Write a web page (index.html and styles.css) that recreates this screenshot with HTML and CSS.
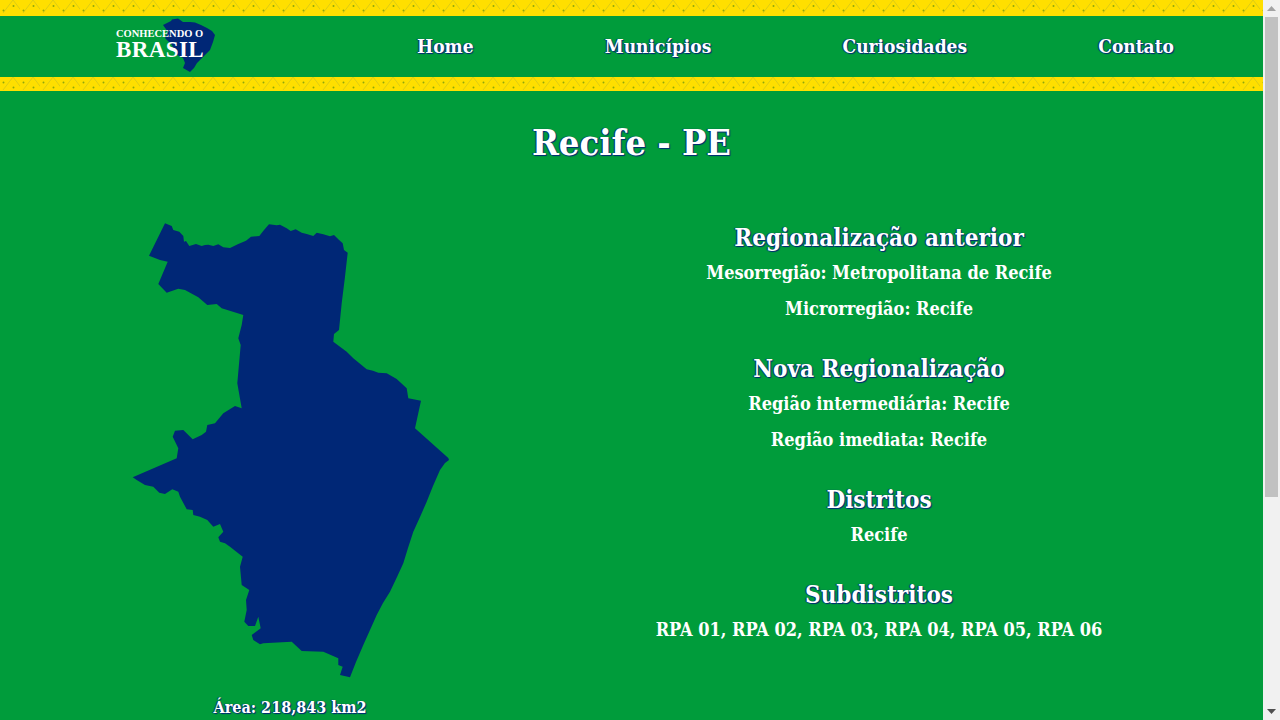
FILE: index.html
```html
<!DOCTYPE html>
<html lang="pt-BR">
<head>
<meta charset="utf-8">
<title>Recife - PE</title>
<link rel="stylesheet" href="styles.css">
</head>
<body>
<header class="site-header">
  <div class="band band-top"></div>
  <nav class="nav">
    <a class="logo" href="#">
      <svg class="logo-map" viewBox="160 18 56 57" aria-hidden="true">
        <path d="M163 25L171 21L172 19.500L178 18.500L183 22L190 22L195 22.500L201 25L207 28L212 31L215 35L213 42L210 50L203 57L197 63L194 68L190 72L183 68L185 63L183 58L175 54L172 45L165 38L168 32Z"/>
      </svg>
      <span class="logo-small">CONHECENDO O</span>
      <span class="logo-big">BRASIL</span>
    </a>
    <ul class="menu">
      <li><a href="#">Home</a></li>
      <li><a href="#">Municípios</a></li>
      <li><a href="#">Curiosidades</a></li>
      <li><a href="#">Contato</a></li>
    </ul>
  </nav>
  <div class="band band-bottom"></div>
</header>
<main class="page">
  <h1 class="title">Recife - PE</h1>
  <div class="columns">
    <section class="map-col">
      <svg class="map" viewBox="130 220 322 460" aria-label="Mapa de Recife">
        <path d="M165 223.3L171.7 226L173.3 230L179.3 231.7L183.3 236L184 241.700L186 241L189.3 246L196 244L201.7 246L205 245L208.3 244.7L213.3 246L218.3 244.3L223.3 247.3L230 248L238.3 244L246 240.7L251 236.7L259.3 236L264 230L269 224.3L276.7 225.3L280 224.7L286.7 228.3L290.7 231L295.7 229.3L301.7 232.7L306.7 234L313.3 236L316.7 232.7L323.3 234.3L330 236.3L334 235L338.3 239.3L342.7 243.3L344 250L347.7 252.7L345 276.7L341.7 303.3L339 330L334 334L333.3 341.7L346.7 351.7L353.3 358.3L366.7 369.3L373 370.7L378.3 372.7L386.7 373.3L396.7 379L406.7 388.3L408.3 398.3L421 400.7L415 428.3L448.3 458L449 460L445 463L440 470L433 486L426.7 501.700L420 517L413.3 531.7L408 548L403.3 563.3L397 577L390 591.700L383 603L376.7 615L370 630L363.3 645L356 662L350 677.3L340 675L342.7 666.7L338.3 665L338.3 658.3L323.3 651.7L301.7 651L291.7 641.7L263.3 643.3L260 644.3L253.3 640L251.7 635L260.7 628.3L258.3 616.7L255 626L248.3 626L244.3 621.7L246.7 610L246 600L249.3 590L241.7 585L240 566.7L242.7 556.7L230 546.7L225 543.3L220 541.7L218.3 537.3L223.3 531.7L220 524L213.3 526.7L207.3 520L200 516.7L193.3 515L192.7 510L186.7 509.3L180 496.7L178.3 491.7L172.3 489.3L165 494L159.3 492.7L153.3 486.7L145 485L136.7 480L132.7 477.3L176.7 458.3L178.3 448.3L172.7 436.7L175 430.7L183.3 430L192.7 439.3L201.7 435L206 431.7L207.3 425L215 423.3L223.3 413.3L235 406L241.7 408.3L237.3 383.3L240.7 345L238.3 338.3L241.7 325L243.3 315L221.7 308.3L216.7 304L207.3 305L198.3 297.3L185 290L178.3 288.7L166.7 292.7L158.3 284L167.7 261.7L160 260L149 255.7Z"/>
      </svg>
      <p class="area">Área: 218,843 km2</p>
    </section>
    <section class="info-col">
      <div class="info-block">
        <h2>Regionalização anterior</h2>
        <p>Mesorregião: Metropolitana de Recife</p>
        <p>Microrregião: Recife</p>
      </div>
      <div class="info-block">
        <h2>Nova Regionalização</h2>
        <p>Região intermediária: Recife</p>
        <p>Região imediata: Recife</p>
      </div>
      <div class="info-block">
        <h2>Distritos</h2>
        <p>Recife</p>
      </div>
      <div class="info-block">
        <h2>Subdistritos</h2>
        <p>RPA 01, RPA 02, RPA 03, RPA 04, RPA 05, RPA 06</p>
      </div>
    </section>
  </div>
</main>
<div class="scrollbar" aria-hidden="true">
  <span class="scroll-arrow arrow-up"></span>
  <div class="scroll-track"><div class="scroll-thumb"></div></div>
  <span class="scroll-arrow arrow-down"></span>
</div>
</body>
</html>
```
FILE: styles.css
```css
* { box-sizing: border-box; }
html { background: #009c3b; }
body {
  margin: 0 17px 0 0;
  min-height: 1027px;
  background: #009c3b;
  color: #fff;
  font-family: "DejaVu Serif Condensed", "DejaVu Serif", serif;
  font-stretch: condensed;
  font-weight: 700;
}
.scrollbar {
  position: fixed;
  top: 0;
  right: 0;
  bottom: 0;
  width: 17px;
  background: #f1f1f1;
  display: flex;
  flex-direction: column;
  align-items: center;
}
.scroll-arrow {
  flex: none;
  width: 17px;
  height: 17px;
  background-repeat: no-repeat;
  background-position: center;
}
.arrow-up {
  background-image: url("data:image/svg+xml,%3Csvg xmlns='http://www.w3.org/2000/svg' width='9' height='5'%3E%3Cpath d='M0 5L4.500 0L9 5z' fill='%23a3a3a3'/%3E%3C/svg%3E");
}
.arrow-down {
  background-image: url("data:image/svg+xml,%3Csvg xmlns='http://www.w3.org/2000/svg' width='9' height='5'%3E%3Cpath d='M0 0L4.500 5L9 0z' fill='%23505050'/%3E%3C/svg%3E");
}
.scroll-track { flex: 1; width: 100%; padding: 0 2px 206px; }
.scroll-thumb { height: 100%; background: #c1c1c1; }
.band {
  background-color: #ffdf00;
  background-size: 20px 16px;
}
.band-top {
  height: 16px;
  background-image: url("data:image/svg+xml,%3Csvg xmlns='http://www.w3.org/2000/svg' width='20' height='16'%3E%3Cpath d='M3 13L13 0L23 13' fill='none' stroke='%23dccb14' stroke-width='1'/%3E%3Ccircle cx='13.500' cy='6' r='1' fill='%238fa80c'/%3E%3Ccircle cx='3.500' cy='10.500' r='1' fill='%238fa80c'/%3E%3C/svg%3E");
}
.band-bottom {
  height: 14px;
  background-image: url("data:image/svg+xml,%3Csvg xmlns='http://www.w3.org/2000/svg' width='20' height='16'%3E%3Cpath d='M3 13L13 0L23 13' fill='none' stroke='%23dccb14' stroke-width='1'/%3E%3Ccircle cx='13.500' cy='10.500' r='1' fill='%238fa80c'/%3E%3Ccircle cx='3.500' cy='5.500' r='1' fill='%238fa80c'/%3E%3C/svg%3E");
}
.nav {
  height: 61px;
  display: flex;
  align-items: center;
  padding: 0 89px 0 115px;
}
.logo {
  position: relative;
  display: flex;
  flex-direction: column;
  width: 100px;
  height: 57px;
  padding: 10px 0 0 1px;
  color: #fff;
  text-decoration: none;
  font-family: "Liberation Serif", serif;
  font-stretch: normal;
}
.logo-map { position: absolute; left: 45px; top: 0; width: 56px; height: 57px; fill: #002776; }
.logo-small { position: relative; font-size: 10.5px; line-height: 12px; white-space: nowrap; }
.logo-big { position: relative; font-size: 23px; line-height: 20px; letter-spacing: .4px; }
.menu {
  list-style: none;
  margin: 0 0 0 202px;
  padding: 0 0 2px;
  flex: 1;
  display: flex;
  justify-content: space-between;
}
.menu a {
  color: #fff;
  text-decoration: none;
  font-size: 19px;
  text-shadow: 1px 1px 1px #002776, -1px 0 1px #002776;
}
.title {
  margin: 0;
  padding-top: 29px;
  text-align: center;
  font-size: 36px;
  line-height: 44px;
  text-shadow: 1px 1px 1px #002776, -1px 0 1px #002776;
}
.columns {
  display: flex;
  padding-top: 56px;
}
.map-col { width: 580px; display: flex; flex-direction: column; align-items: center; }
.map { display: block; width: 322px; height: 460px; fill: #002776; margin-left: 2px; }
.area {
  margin: 18px 0 0;
  font-size: 16px;
  line-height: 20px;
  text-shadow: 1px 1px 1px #002776, -1px 0 1px #002776;
}
.info-col { width: 598px; text-align: center; padding-top: 1px; }
.info-block { margin-bottom: 25px; }
.info-block h2 {
  margin: 0;
  font-size: 24px;
  line-height: 34px;
  text-shadow: 1px 1px 1px #002776, -1px 0 1px #002776;
}
.info-block p {
  margin: 0;
  font-size: 18px;
  line-height: 36px;
}
```
